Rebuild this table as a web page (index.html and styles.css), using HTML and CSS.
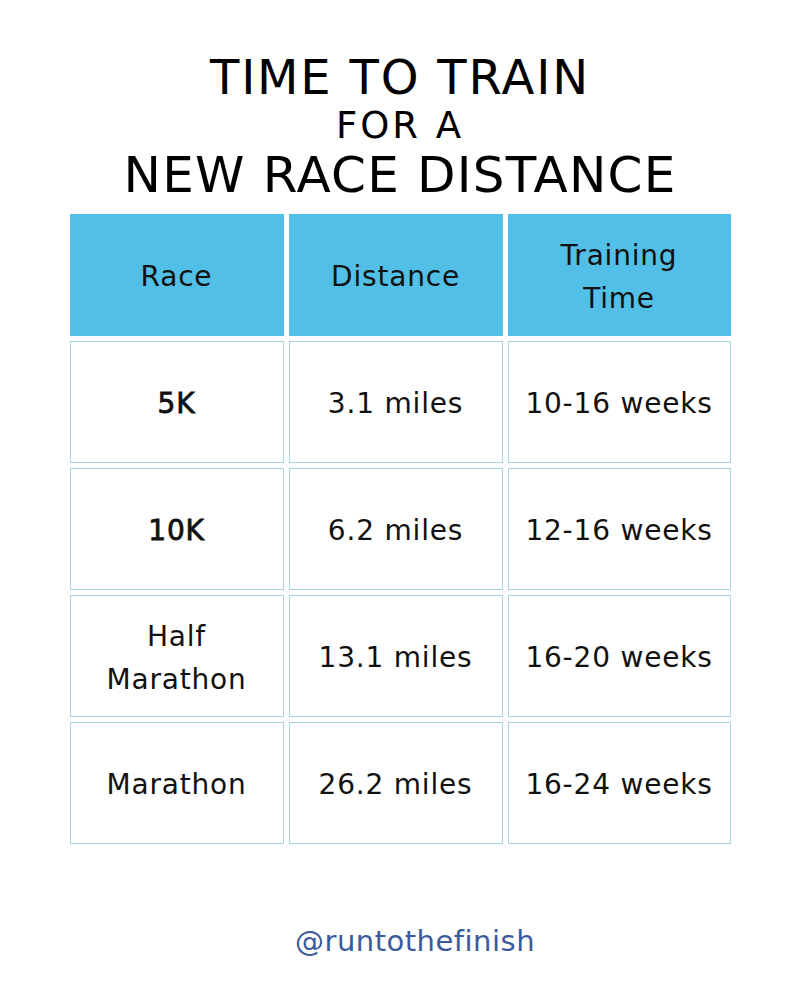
FILE: index.html
```html
<!DOCTYPE html>
<html>
<head>
<meta charset="utf-8">
<link rel="stylesheet" href="styles.css">
</head>
<body>
<div class="page">
  <header class="title">
    <div class="t1">TIME TO TRAIN</div>
    <div class="t2">FOR A</div>
    <div class="t3">NEW RACE DISTANCE</div>
  </header>
  <div class="table">
    <div class="cell head">Race</div>
    <div class="cell head">Distance</div>
    <div class="cell head">Training<br>Time</div>

    <div class="cell strong">5K</div>
    <div class="cell">3.1 miles</div>
    <div class="cell">10-16 weeks</div>

    <div class="cell strong">10K</div>
    <div class="cell">6.2 miles</div>
    <div class="cell">12-16 weeks</div>

    <div class="cell">Half<br>Marathon</div>
    <div class="cell">13.1 miles</div>
    <div class="cell">16-20 weeks</div>

    <div class="cell">Marathon</div>
    <div class="cell">26.2 miles</div>
    <div class="cell">16-24 weeks</div>
  </div>
  <footer class="handle">@runtothefinish</footer>
</div>
</body>
</html>
```
FILE: styles.css
```css
html, body {
  margin: 0;
  padding: 0;
  background: #ffffff;
}
body {
  font-family: "DejaVu Sans", "Open Sans", sans-serif;
  color: #111111;
}
.page {
  width: 800px;
  height: 1000px;
  display: flex;
  flex-direction: column;
  align-items: center;
}
.title {
  padding-top: 49px;
  display: flex;
  flex-direction: column;
  align-items: center;
  text-align: center;
  font-weight: 400;
  color: #000;
}
.t1 {
  font-size: 48px;
  line-height: 56px;
  letter-spacing: 1.8px;
}
.t2 {
  font-size: 37px;
  line-height: 44px;
  letter-spacing: 3px;
  margin-top: -1px;
}
.t3 {
  font-size: 50px;
  line-height: 54px;
  letter-spacing: 1.2px;
}
.table {
  margin-top: 12px;
  display: grid;
  grid-template-columns: 214px 214px 223px;
  grid-auto-rows: 122px;
  gap: 5px;
}
.cell {
  box-sizing: border-box;
  border: 1.5px solid #a8d6e0;
  display: flex;
  align-items: center;
  justify-content: center;
  text-align: center;
  font-size: 28px;
  line-height: 43px;
  letter-spacing: 0.8px;
  color: #111;
  padding-top: 3px;
}
.head {
  background: #52bfe7;
  border-color: #52bfe7;
}
.strong {
  -webkit-text-stroke: 0.8px #111;
}
.handle {
  margin-top: 80px;
  margin-left: 30px;
  font-size: 29px;
  color: #3b5a9c;
  letter-spacing: 0.5px;
}
```
